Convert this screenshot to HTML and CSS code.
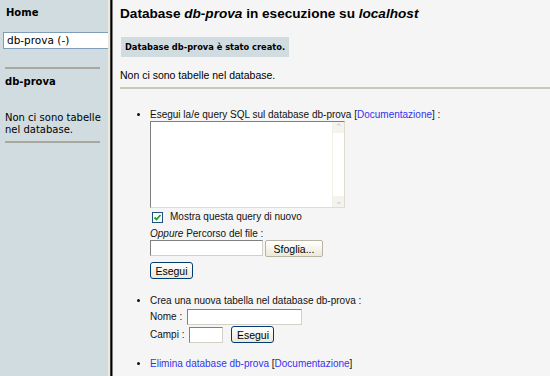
FILE: index.html
```html
<!DOCTYPE html>
<html lang="it">
<head>
<meta charset="utf-8">
<title>phpMyAdmin</title>
<link rel="stylesheet" href="styles.css">
</head>
<body>
<div class="frames">
  <aside class="side">
    <div class="home">Home</div>
    <div class="dbsel">db-prova (-)</div>
    <div class="rule"></div>
    <div class="dbname">db-prova</div>
    <div class="notab">Non ci sono tabelle<br>nel database.</div>
    <div class="rule"></div>
  </aside>
  <div class="divider"></div>
  <main class="main">
    <h1 class="title">Database <i>db-prova</i> in esecuzione su <i>localhost</i></h1>
    <div class="msg">Database db-prova è stato creato.</div>
    <p class="info">Non ci sono tabelle nel database.</p>
    <div class="hr"></div>
    <ul class="ops">
      <li>
        <div class="line">Esegui la/e query SQL sul database db-prova [<a href="#">Documentazione</a>] :</div>
        <div class="ta">
          <div class="sb"><span class="arr">&#8963;</span><span class="arr">&#8964;</span></div>
        </div>
        <div class="chkrow"><span class="chk"><svg width="9" height="9" viewBox="0 0 9 9"><path d="M1.5 4.5 L3.5 6.5 L7.5 2" fill="none" stroke="#21a121" stroke-width="1.8"/></svg></span>Mostra questa query di nuovo</div>
        <div class="line lbl"><i>Oppure</i> Percorso del file :</div>
        <div class="filerow"><span class="field ffile"></span><span class="btn bfile">Sfoglia...</span></div>
        <div class="gorow"><span class="btn go">Esegui</span></div>
      </li>
      <li class="li2">
        <div class="line">Crea una nuova tabella nel database db-prova :</div>
        <div class="frow">Nome : <span class="field fnome"></span></div>
        <div class="frow">Campi : <span class="field fcampi"></span><span class="btn go">Esegui</span></div>
      </li>
      <li class="li3">
        <div class="line"><a href="#">Elimina database db-prova</a> [<a href="#">Documentazione</a>]</div>
      </li>
    </ul>
  </main>
</div>
</body>
</html>
```
FILE: styles.css
```css
* { box-sizing: border-box; }
html, body { margin: 0; padding: 0; height: 100%; overflow: hidden; }
body { font-family: "Liberation Sans", Arial, sans-serif; font-size: 11px; color: #000; }
.frames { display: flex; height: 376px; }
.side {
  width: 108px; flex: none; background: #d0dce0; padding: 6px 0 0 0;
  font-family: "DejaVu Sans", Verdana, sans-serif; font-size: 10px; overflow: hidden;
}
.home { font-weight: bold; padding-left: 6px; height: 15px; line-height: 13px; }
.dbsel {
  margin: 11px 0 0 3px; width: 110px; height: 17px; background: #fff;
  border: 1px solid #7f9db9; padding: 1px 0 0 3px; font-size: 10.5px;
}
.rule { height: 2px; background: #a8a8a0; margin: 18px 8px 0 5px; }
.dbname { font-weight: bold; padding-left: 5px; margin-top: 7px; }
.notab { padding-left: 5px; margin-top: 25px; line-height: 12px; }
.side .rule:last-child { margin-top: 5px; }
.divider {
  width: 5px; flex: none;
  background: linear-gradient(to right, #ece9d8 0 2px, #404040 2px 3px, #000 3px 4px, #808080 4px 5px);
}
.main { flex: 1; background: #f5f5f5; padding: 5px 0 0 7px; }
.title { font-size: 13.6px; font-weight: bold; margin: 0; height: 20px; line-height: 18px; }
.msg {
  width: fit-content; background: #d0dce0; margin: 12px 0 0 1px;
  padding: 0 4px; height: 20px; line-height: 20px; font-weight: bold;
  font-family: "DejaVu Sans Condensed", "DejaVu Sans", sans-serif; font-size: 9.2px;
}
.info { margin: 12px 0 0 0; font-size: 10.5px; line-height: 12px; }
.hr { height: 2px; background: #c8c8b4; margin-top: 6px; }
a { color: #3333ee; text-decoration: none; }
.ops { margin: 0; padding: 20px 0 0 30px; list-style: disc; font-size: 10px; line-height: 12px; color: #111; }
.ta {
  position: relative; width: 195px; height: 87px; background: #fff; margin-top: 0;
  border-top: 1px solid #808080; border-left: 1px solid #808080;
  border-right: 1px solid #e0ddd0; border-bottom: 1px solid #e0ddd0;
}
.sb {
  position: absolute; right: 0; top: 0; bottom: 0; width: 12px; background: #fff;
  display: flex; flex-direction: column; justify-content: space-between; align-items: center;
  border-left: 1px solid #f0efe8;
}
.arr { color: #c8c8c8; font-size: 9px; line-height: 11px; width: 11px; text-align: center; background: #f4f3ee; }
.chkrow { display: flex; align-items: center; margin-top: 3px; padding-left: 2px; height: 12px; }
.chk {
  width: 11px; height: 11px; border: 1px solid #1c5180; background: #fff;
  display: inline-flex; align-items: center; justify-content: center; margin-right: 7px;
}
.lbl { margin-top: 5px; }
.filerow { display: flex; gap: 2px; margin-top: 0; align-items: flex-start; }
.field {
  display: inline-block; background: #fff; height: 16px;
  border-top: 1px solid #808080; border-left: 1px solid #808080;
  border-right: 1px solid #d4d0c8; border-bottom: 1px solid #d4d0c8;
}
.ffile { width: 113px; }
.btn {
  display: inline-flex; align-items: center; justify-content: center; height: 17px;
  background: linear-gradient(#fff, #ece9d8); border: 1px solid #b8b4a4; border-radius: 2px;
  font-size: 10.5px; color: #000;
}
.bfile { width: 58px; }
.gorow { margin-top: 5px; display: flex; }
.go { width: 43px; border: 1px solid #003c74; border-radius: 3px; }
.li2 { margin-top: 16px; }
.frow { display: flex; align-items: center; margin-top: 1px; height: 17px; }
.fnome { width: 115px; margin-left: 5px; }
.fcampi { width: 34px; margin-left: 5px; margin-right: 8px; }
.li3 { margin-top: 15px; }
```
